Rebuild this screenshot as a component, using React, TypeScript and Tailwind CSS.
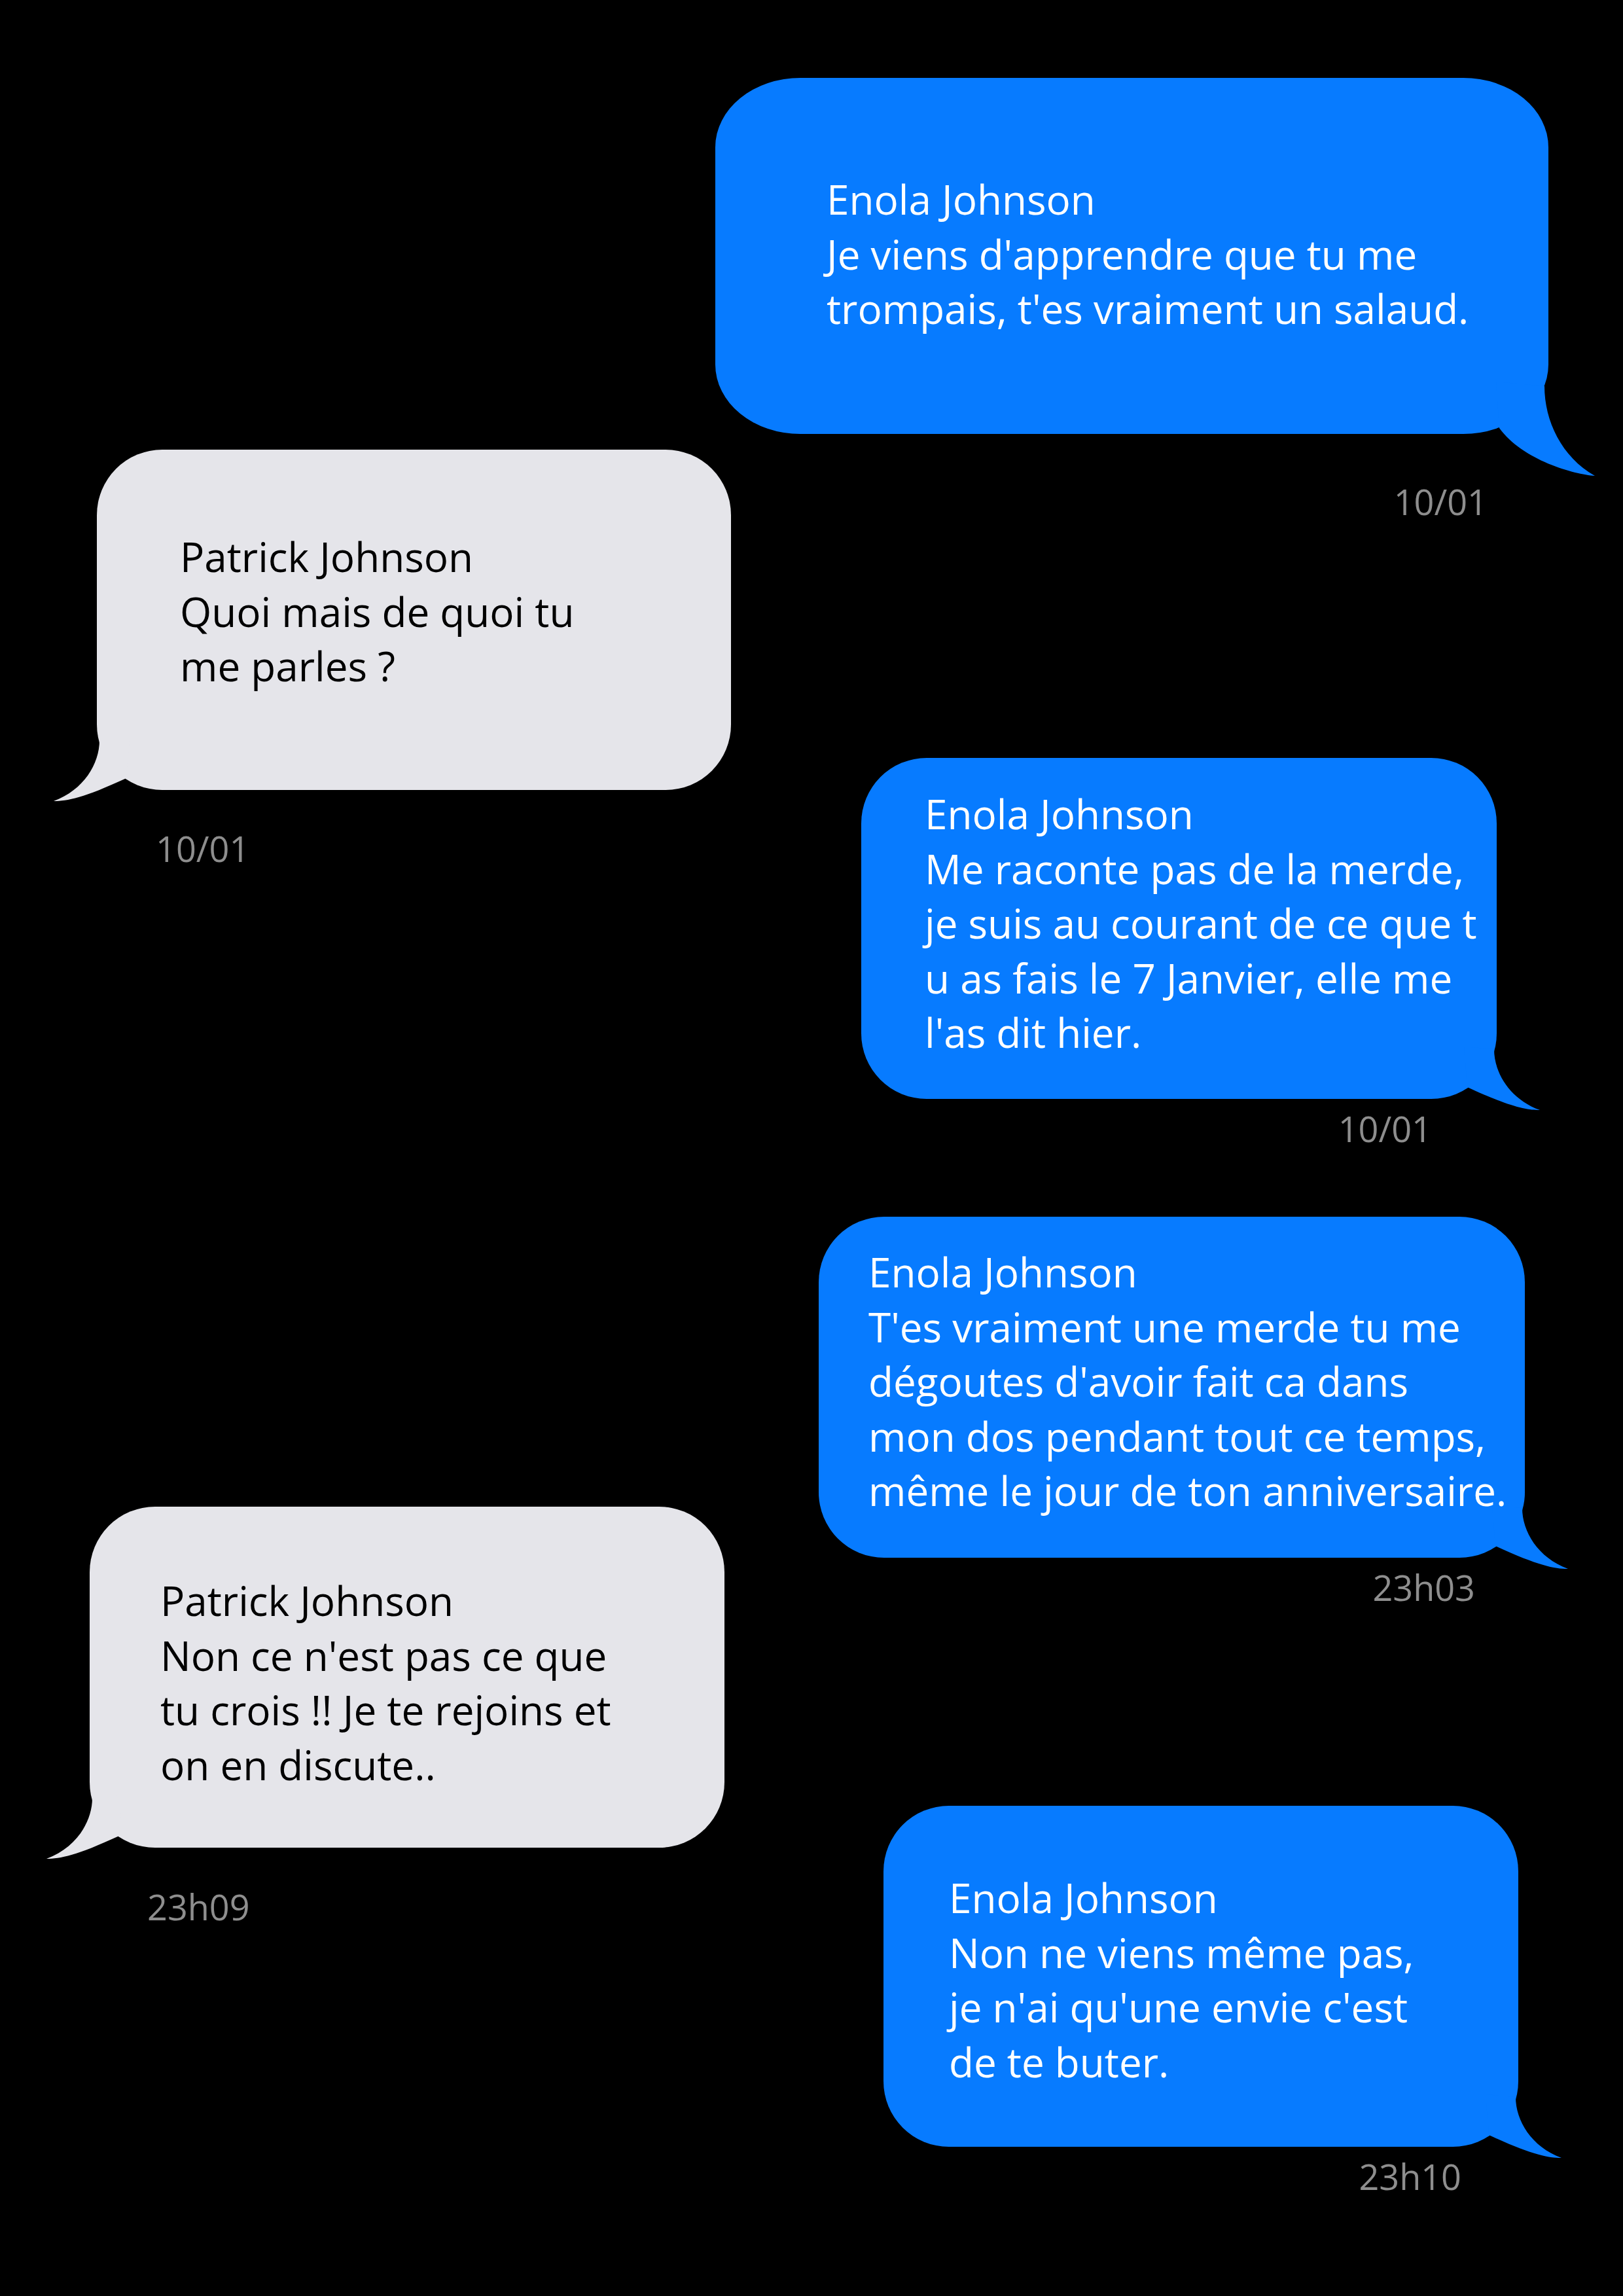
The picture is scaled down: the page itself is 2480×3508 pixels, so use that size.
import React from 'react';

type Msg = {
  id: number;
  name: string;
  lines: string[];
  time: string;
  bubble: string;
  stamp: string;
  wrap: string;
  bigTail?: boolean;
};

// outgoing (blue, right lane)
const sent: Msg[] = [
  {
    id: 1,
    name: 'Enola Johnson',
    lines: ["Je viens d'apprendre que tu me", "trompais, t'es vraiment un salaud."],
    time: '10/01',
    wrap: 'mr-[114px]',
    bubble: 'w-[1273px] h-[544px] pl-[170px] pt-[144px] rounded-[130px/106px]',
    stamp: 'mt-[76px] mr-[93px]',
    bigTail: true,
  },
  {
    id: 3,
    name: 'Enola Johnson',
    lines: [
      'Me raconte pas de la merde,',
      'je suis au courant de ce que t',
      'u as fais le 7 Janvier, elle me',
      "l'as dit hier.",
    ],
    time: '10/01',
    wrap: 'mt-[365px] mr-[193px]',
    bubble: 'w-[971px] h-[521px] pl-[97px] pt-[44px] rounded-[100px]',
    stamp: 'mt-[18px] mr-[99px]',
  },
  {
    id: 4,
    name: 'Enola Johnson',
    lines: [
      'T\'es vraiment une merde tu me',
      "dégoutes d'avoir fait ca dans",
      'mon dos pendant tout ce temps,',
      'même le jour de ton anniversaire.',
    ],
    time: '23h03',
    wrap: 'mt-[108px] mr-[150px]',
    bubble: 'w-[1079px] h-[521px] pl-[76px] pt-[43px] rounded-[100px]',
    stamp: 'mt-[18px] mr-[76px]',
  },
  {
    id: 6,
    name: 'Enola Johnson',
    lines: ['Non ne viens même pas,', "je n'ai qu'une envie c'est", 'de te buter.'],
    time: '23h10',
    wrap: 'mt-[307px] mr-[160px]',
    bubble: 'w-[970px] h-[521px] pl-[100px] pt-[99px] rounded-[100px]',
    stamp: 'mt-[18px] mr-[87px]',
  },
];

// incoming (grey, left lane)
const received: Msg[] = [
  {
    id: 2,
    name: 'Patrick Johnson',
    lines: ['Quoi mais de quoi tu', 'me parles ?'],
    time: '10/01',
    wrap: 'ml-[148px]',
    bubble: 'w-[969px] h-[520px] pl-[127px] pt-[122px] rounded-[100px]',
    stamp: 'mt-[62px] ml-[90px]',
  },
  {
    id: 5,
    name: 'Patrick Johnson',
    lines: ["Non ce n'est pas ce que", 'tu crois !! Je te rejoins et', 'on en discute..'],
    time: '23h09',
    wrap: 'mt-[979px] ml-[137px]',
    bubble: 'w-[970px] h-[521px] pl-[108px] pt-[102px] rounded-[100px]',
    stamp: 'mt-[63px] ml-[88px]',
  },
];

function Tail({ side, big, color }: { side: 'left' | 'right'; big?: boolean; color: string }) {
  if (big) {
    return (
      <svg
        viewBox="0 0 160 150"
        className="absolute -right-[80px] -bottom-[70px] w-[160px] h-[150px]"
      >
        <path d="M0 0 L74 7 C74 60 100 115 151 144 C120 142 40 120 5 71 Z" fill={color} />
      </svg>
    );
  }
  const pos =
    side === 'right'
      ? 'absolute -right-[70px] -bottom-[20px] w-[120px] h-[100px]'
      : 'absolute -left-[70px] -bottom-[20px] w-[120px] h-[100px] -scale-x-100';
  return (
    <svg viewBox="0 0 120 100" className={pos}>
      <path d="M0 0 L46 4 C46 40 70 80 116 97 C95 97 70 92 5 62 Z" fill={color} />
    </svg>
  );
}

function Bubble({ msg, side }: { msg: Msg; side: 'left' | 'right' }) {
  const mine = side === 'right';
  return (
    <div className={`flex flex-col ${mine ? 'items-end' : 'items-start'} ${msg.wrap}`}>
      <div
        className={`relative ${msg.bubble} ${
          mine ? 'bg-[#077bff] text-white' : 'bg-[#e5e5ea] text-black'
        }`}
      >
        <Tail side={side} big={msg.bigTail} color={mine ? '#077bff' : '#e5e5ea'} />
        <div className="relative text-[62px] leading-[83.5px] whitespace-nowrap">
          <div>{msg.name}</div>
          {msg.lines.map((l, i) => (
            <div key={i}>{l}</div>
          ))}
        </div>
      </div>
      <div className={`h-[54px] text-[54px] leading-none text-[#8e8e8e] ${msg.stamp}`}>
        {msg.time}
      </div>
    </div>
  );
}

export default function App() {
  return (
    <div className="min-h-[3508px] w-full bg-black font-['Open_Sans',sans-serif] overflow-hidden">
      <div className="grid">
        {/* incoming lane */}
        <div className="col-start-1 row-start-1 flex flex-col items-start pt-[687px]">
          {received.map(m => (
            <Bubble key={m.id} msg={m} side="left" />
          ))}
        </div>
        {/* outgoing lane */}
        <div className="col-start-1 row-start-1 flex flex-col items-end pt-[119px]">
          {sent.map(m => (
            <Bubble key={m.id} msg={m} side="right" />
          ))}
        </div>
      </div>
    </div>
  );
}
